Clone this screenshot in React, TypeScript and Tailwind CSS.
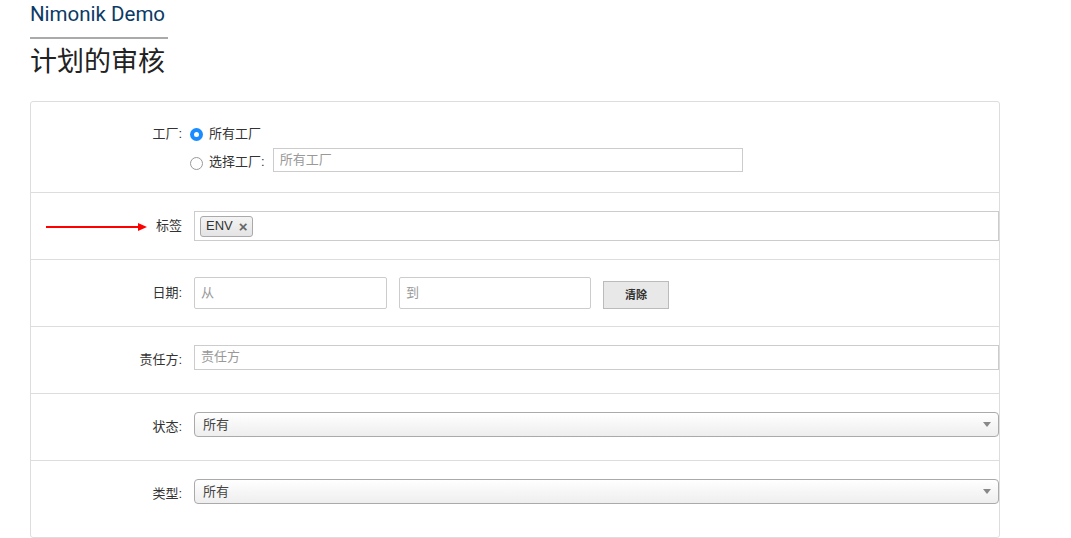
const FONT = { fontFamily: '"Liberation Sans", "Noto Sans CJK SC", sans-serif' }

function Row({ h, children, first }: { h: string; children: React.ReactNode; first?: boolean }) {
  return (
    <div className={`flex ${h} ${first ? '' : 'border-t border-[#dddddd]'}`}>
      {children}
    </div>
  )
}

function Label({ text, className = '' }: { text: string; className?: string }) {
  return <div className={`w-[151px] shrink-0 text-right text-[13px] text-[#333] ${className}`}>{text}</div>
}

function Select({ value }: { value: string }) {
  return (
    <div className="flex-1 h-[25px] flex items-center justify-between rounded-[4px] border border-[#aaaaaa] bg-gradient-to-b from-white to-[#eeeeee] pl-[8px] pr-[6px] text-[13px] text-[#444]">
      <span>{value}</span>
      <svg width="8" height="5" viewBox="0 0 8 5" className="mr-[1px]"><path d="M0 0h8L4 5z" fill="#888" /></svg>
    </div>
  )
}

export default function App() {
  return (
    <div className="bg-white w-[1071px] h-[538px] overflow-hidden relative" style={FONT}>
      <div className="pl-[30px]">
        <div className="inline-block">
          <div className="text-[20.5px] leading-[28px] text-[#0b3a66]" style={{ fontFamily: 'Roboto, "Noto Sans CJK SC", sans-serif' }}>Nimonik Demo</div>
          <div className="mt-[9px] h-[2px] w-[138px] bg-[#aaaaaa]" />
        </div>
        <div className="text-[27px] leading-[34px] text-[#222] mt-[4px]" style={{ fontFamily: '"Noto Sans CJK SC", sans-serif' }}>计划的审核</div>
      </div>

      <div className="ml-[30px] mt-[24px] w-[970px] border border-[#dddddd] rounded-[3px]">
        <Row h="h-[90px]" first>
          <Label text="工厂:" className="pt-[22px]" />
          <div className="ml-[8px] pt-[22px] text-[13px] text-[#333]">
            <div className="flex items-center h-[20px]">
              <span className="w-[13px] h-[13px] rounded-full bg-[#1a8cff] flex items-center justify-center">
                <span className="w-[5px] h-[5px] rounded-full bg-white" />
              </span>
              <span className="ml-[6px]">所有工厂</span>
            </div>
            <div className="flex items-center mt-[4px]">
              <span className="w-[13px] h-[13px] rounded-full border border-[#999] bg-white mt-[6px]" />
              <span className="ml-[6px] mt-[4px]">选择工厂:</span>
              <div className="ml-[8px] w-[470px] h-[24px] border border-[#cccccc] text-[#999] pl-[6px] leading-[22px]">所有工厂</div>
            </div>
          </div>
        </Row>

        <Row h="h-[67px]">
          <div className="w-[151px] shrink-0 relative">
            <div className="absolute left-[15px] top-[33px] w-[96px] h-[2px] bg-[#ff0000]" />
            <svg className="absolute left-[107px] top-[30px]" width="9" height="8" viewBox="0 0 9 8"><path d="M0 0L9 4L0 8z" fill="#ff0000" /></svg>
            <div className="text-right text-[13px] text-[#333] pt-[23px]">标签</div>
          </div>
          <div className="flex-1 ml-[12px] mt-[18px] h-[30px] border border-[#cccccc] flex items-center pl-[5px]">
            <div className="flex items-center h-[21px] pl-[5px] pr-[4px] rounded-[3px] border border-[#aaaaaa] bg-gradient-to-b from-[#f4f4f4] to-[#e4e4e4] text-[13px] text-[#333]">
              ENV<span className="ml-[6px] text-[#666] font-bold text-[15px] leading-none">×</span>
            </div>
          </div>
        </Row>

        <Row h="h-[67px]">
          <Label text="日期:" className="pt-[23px]" />
          <div className="flex ml-[12px] mt-[17px] h-[32px] items-start">
            <div className="w-[193px] h-[32px] border border-[#cccccc] rounded-[2px] text-[13px] text-[#999] pl-[6px] leading-[30px]">从</div>
            <div className="ml-[12px] w-[192px] h-[32px] border border-[#cccccc] rounded-[2px] text-[13px] text-[#999] pl-[6px] leading-[30px]">到</div>
            <button className="ml-[12px] mt-[4px] w-[66px] h-[28px] border border-[#bbbbbb] bg-[#e8e8e8] text-[11px] font-bold text-[#333]">清除</button>
          </div>
        </Row>

        <Row h="h-[67px]">
          <Label text="责任方:" className="pt-[23px]" />
          <div className="flex-1 ml-[12px] mt-[18px] h-[25px] border border-[#cccccc] text-[13px] text-[#999] pl-[6px] leading-[22px]">责任方</div>
        </Row>

        <Row h="h-[67px]">
          <Label text="状态:" className="pt-[23px]" />
          <div className="flex-1 ml-[12px] mt-[18px] flex"><Select value="所有" /></div>
        </Row>

        <Row h="h-[77px]">
          <Label text="类型:" className="pt-[23px]" />
          <div className="flex-1 ml-[12px] mt-[18px] flex"><Select value="所有" /></div>
        </Row>
      </div>
    </div>
  )
}
